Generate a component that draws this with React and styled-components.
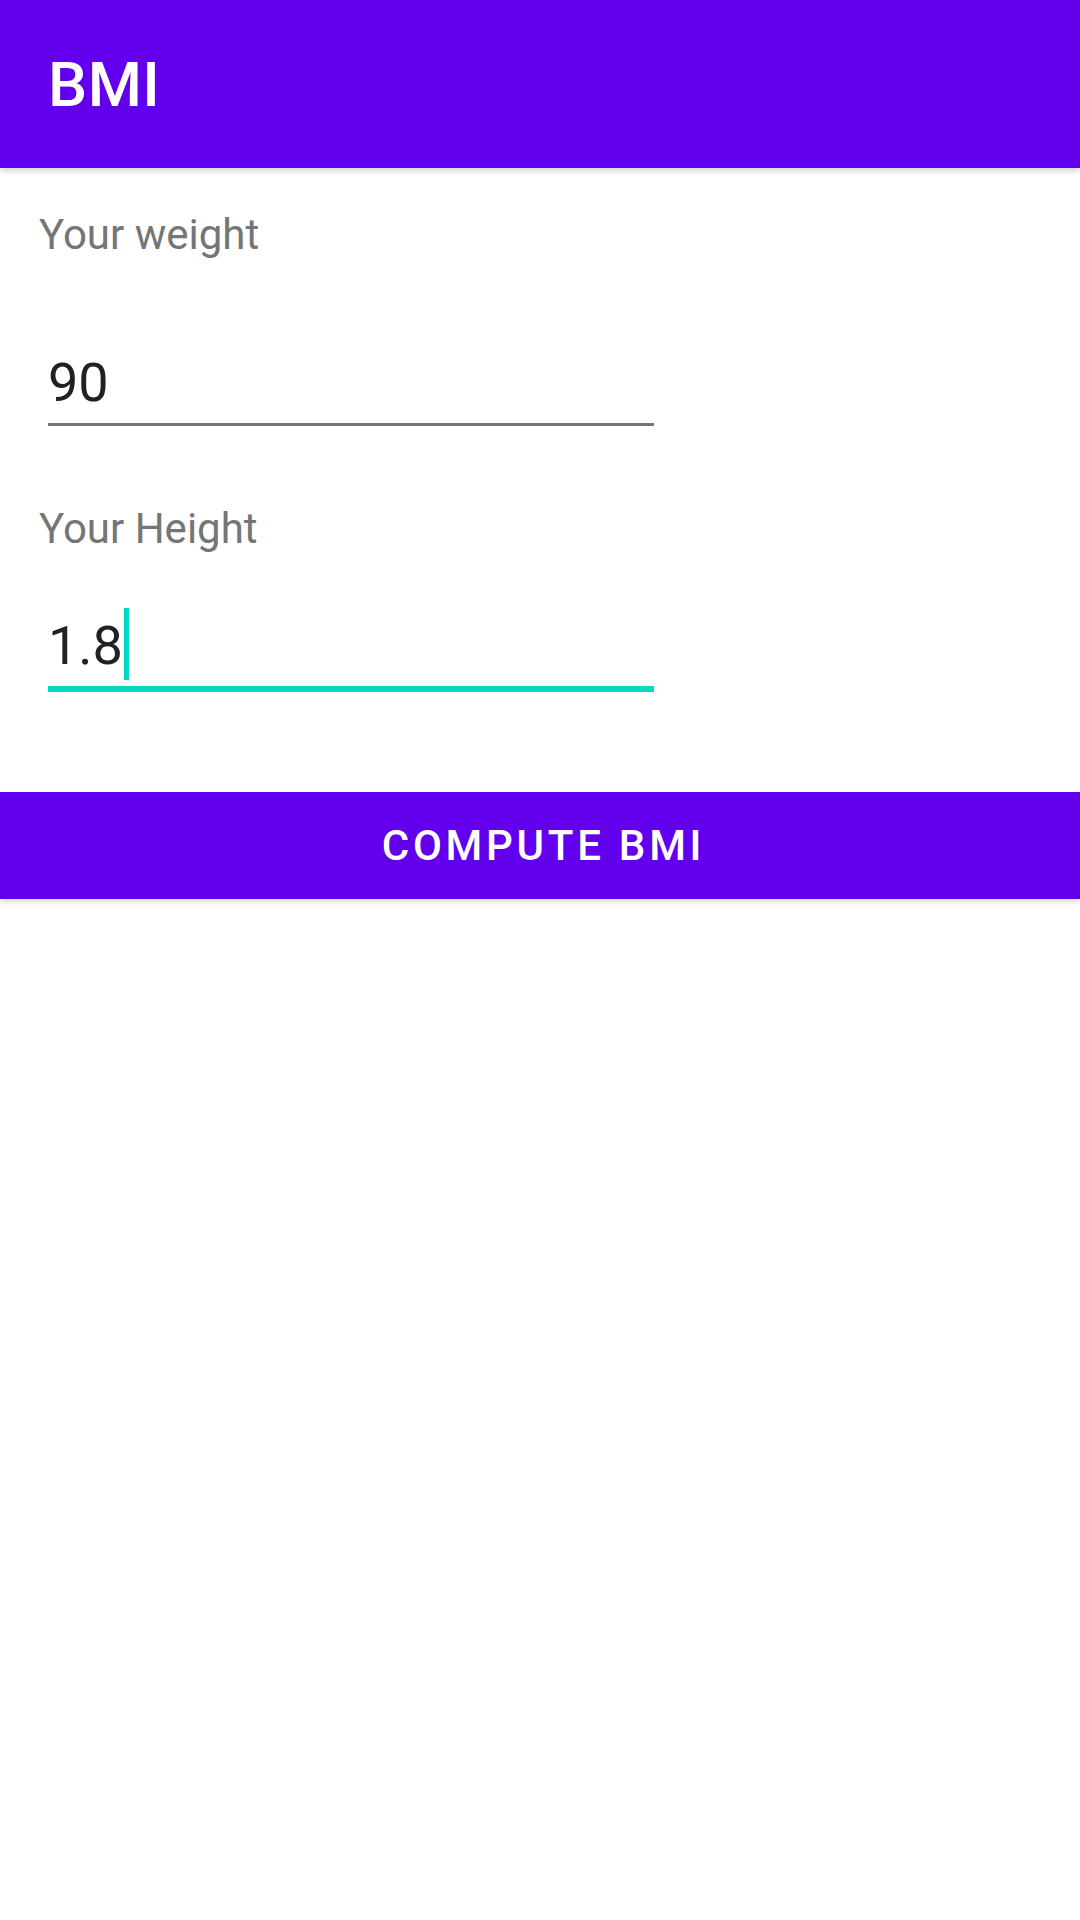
import React from 'react';
import styled, { createGlobalStyle } from 'styled-components';

const GlobalStyle = createGlobalStyle`
  html, body {
    margin: 0;
    padding: 0;
    background: #FFFFFF;
    font-family: Roboto, "Noto Sans", sans-serif;
  }
`

const Screen = styled.div`
  width: 1080px;
  min-height: 1920px;
  display: flex;
  flex-direction: column;
  background: #FFFFFF;
`

const AppBar = styled.header`
  height: 168px;
  display: flex;
  align-items: center;
  padding-left: 48px;
  background-color: #6200EE;
  box-shadow: 0 3px 6px rgba(0, 0, 0, 0.18);
  position: relative;
  z-index: 1;
`

const Title = styled.h1`
  margin: 0;
  font-size: 62px;
  font-weight: 500;
  color: #FFFFFF;
  letter-spacing: 0.5px;
`

const Form = styled.main`
  display: flex;
  flex-direction: column;
`

const Label = styled.label`
  display: block;
  margin: ${props => props.top}px 0 0 39px;
  font-size: 42px;
  line-height: 50px;
  color: #757575;
`

const Field = styled.div`
  display: flex;
  align-items: center;
  width: 606px;
  margin: ${props => props.top}px 0 0 48px;
  padding-bottom: 8px;
  font-size: 54px;
  line-height: 64px;
  color: #212121;
  border-bottom: ${props => props.focused ? '6px solid #03DAC5' : '3px solid #757575'};
`

const Cursor = styled.span`
  display: inline-block;
  width: 5px;
  height: 72px;
  margin: -7px 0 -2px 1px;
  background-color: #03DAC5;
`

const ComputeButton = styled.button`
  margin-top: 100px;
  width: 1080px;
  height: 107px;
  padding: 0 0 0 7px;
  border: none;
  background-color: #6200EE;
  color: #FFFFFF;
  font-family: Roboto, sans-serif;
  font-size: 42px;
  font-weight: 500;
  letter-spacing: 3.75px;
  text-transform: uppercase;
  box-shadow: 0 3px 5px rgba(0, 0, 0, 0.15);
  cursor: pointer;
`

const App = () => {
  return (
    <Screen>
      <GlobalStyle />
      <AppBar>
        <Title>BMI</Title>
      </AppBar>
      <Form>
        <Label top={42}>Your weight</Label>
        <Field top={91}>90</Field>
        <Label top={78}>Your Height</Label>
        <Field top={60} focused>
          1.8<Cursor />
        </Field>
        <ComputeButton>Compute BMI</ComputeButton>
      </Form>
    </Screen>
  )
}

export default App;
